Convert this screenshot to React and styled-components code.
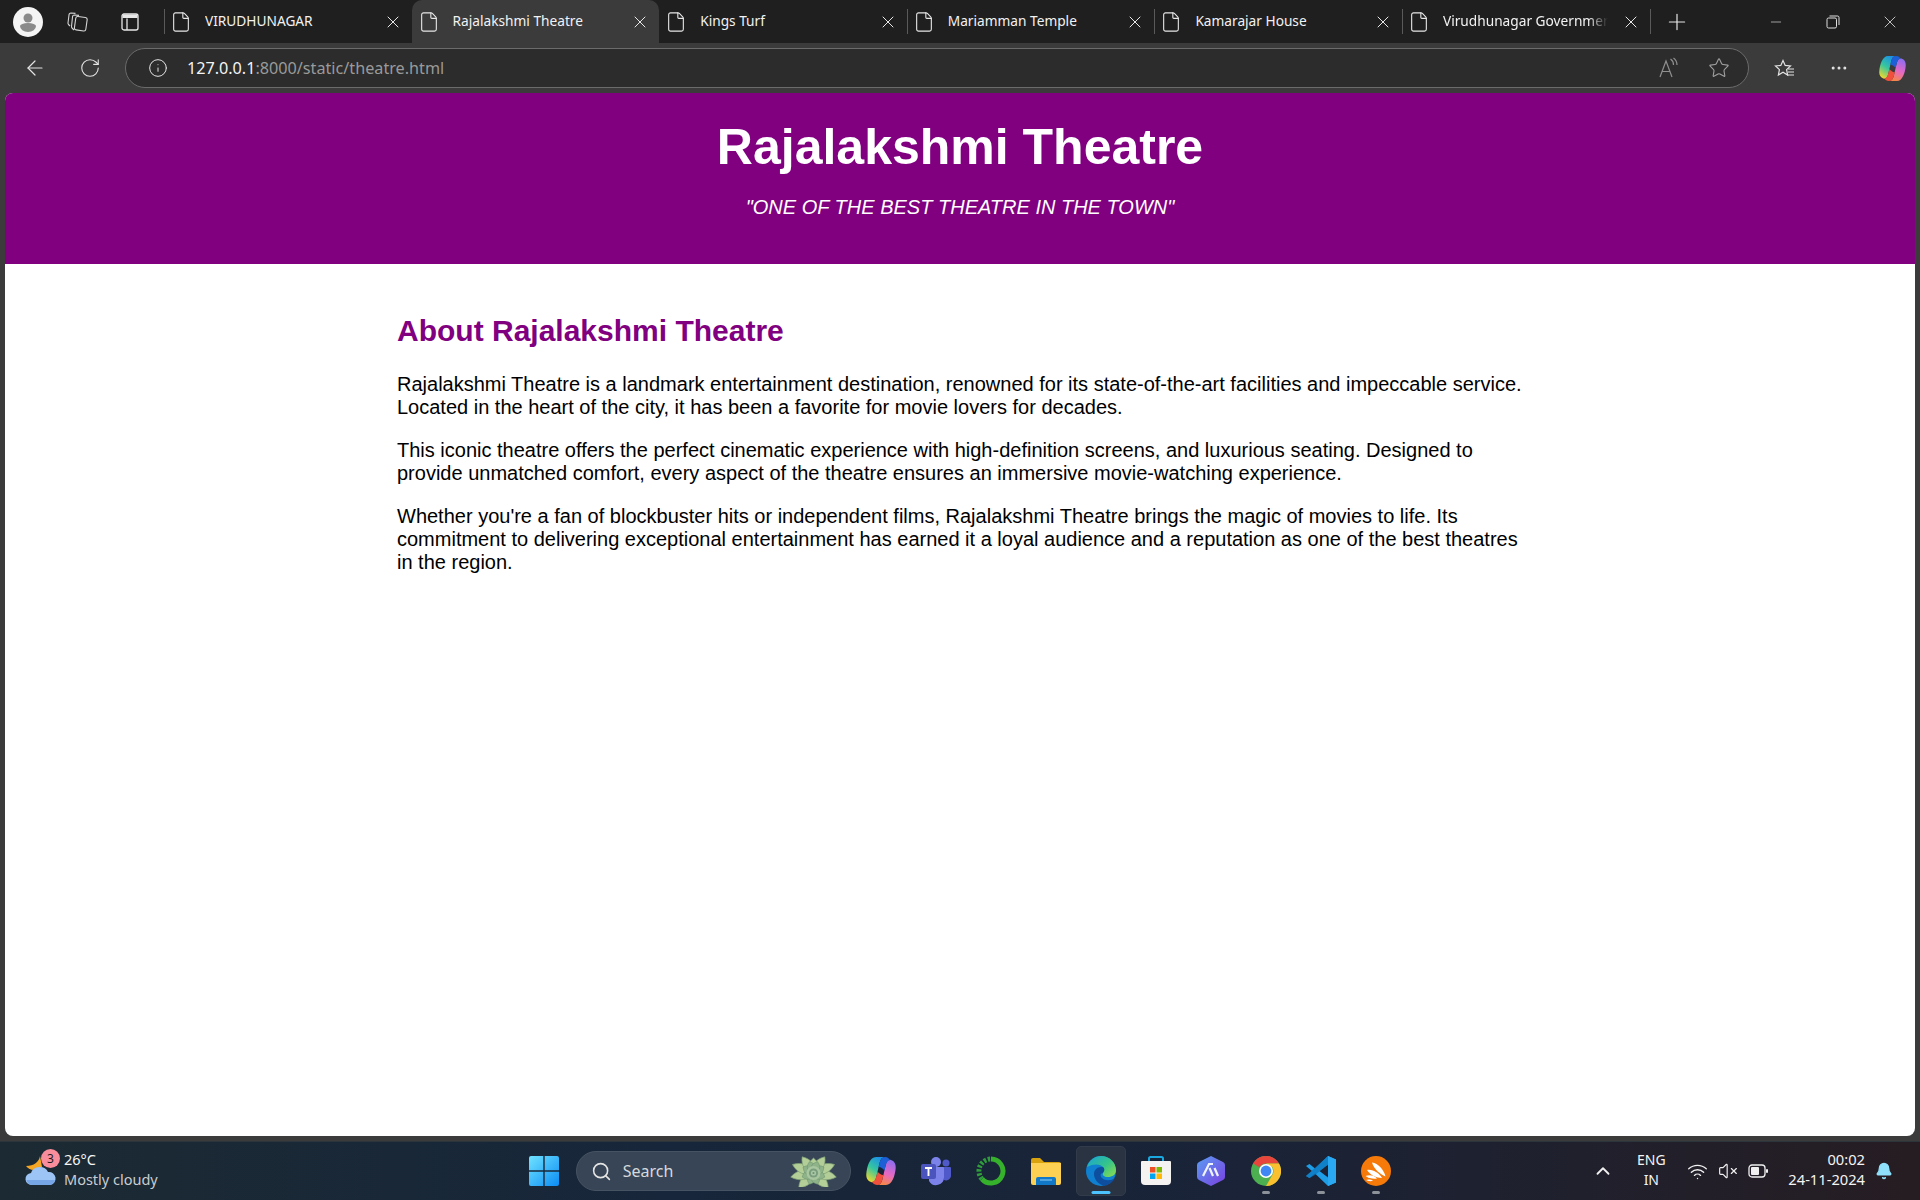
import styled, { createGlobalStyle } from "styled-components";
import {
  ArrowLeft,
  ChevronUp,
  File,
  Info,
  MoreHorizontal,
  Plus,
  RotateCw,
  Search,
  Star,
  Minus,
  X,
  Wifi,
  VolumeX,
  Bell,
} from "lucide-react";

const GlobalStyle = createGlobalStyle`
  html, body { margin: 0; padding: 0; height: 100%; }
  body { background: #3b3b3b; overflow: hidden; }
`;

const tabs = [
  { title: "VIRUDHUNAGAR", divider: true },
  { title: "Rajalakshmi Theatre", active: true },
  { title: "Kings Turf" },
  { title: "Mariamman Temple", divider: true },
  { title: "Kamarajar House", divider: true },
  { title: "Virudhunagar Government", divider: true, fade: true },
];

const ProfileIcon = () => (
  <svg width="30" height="30" viewBox="0 0 30 30">
    <circle cx="15" cy="15" r="15" fill="#f4f4f4" />
    <circle cx="15" cy="11" r="4.5" fill="#8a8a8a" />
    <path d="M7 19 a8 3 0 0 1 16 0 a8 6 0 0 1 -16 0z" fill="#8a8a8a" />
  </svg>
);

const WorkspacesIcon = () => (
  <svg width="22" height="22" viewBox="0 0 22 22" fill="none" stroke="#d4d4d4" strokeWidth="1.1">
    <rect x="9" y="6" width="11.5" height="13.5" rx="2" transform="rotate(8 15 13)" />
    <path d="M8 19 L6 17 a2 2 0 0 1 -0.5 -1.5 L6.5 6 a2 2 0 0 1 2 -2 L13 4.4" />
    <path d="M4 15 L2.5 13.5 a2 2 0 0 1 -0.5 -1.5 L3 4 a2 2 0 0 1 2 -2 L9.5 2.4" />
  </svg>
);

const VerticalTabsIcon = () => (
  <svg width="20" height="20" viewBox="0 0 20 20" fill="none" stroke="#e8e8e8" strokeWidth="1.3">
    <rect x="2" y="2" width="16" height="16" rx="2" />
    <path d="M7 6.5 V18" />
    <path d="M2.5 2.5 H17.5 V6 H2.5z" fill="#e8e8e8" stroke="none" />
  </svg>
);

const RestoreIcon = () => (
  <svg width="14" height="14" viewBox="0 0 14 14" fill="none" stroke="#e0e0e0" strokeWidth="1">
    <rect x="1" y="3" width="9.5" height="10" rx="1.5" />
    <path d="M3.5 1 H11.5 a1.5 1.5 0 0 1 1.5 1.5 V10" />
  </svg>
);

const ReadAloudIcon = () => (
  <svg width="22" height="22" viewBox="0 0 22 22" fill="none" stroke="#8f8f8f" strokeWidth="1.2">
    <path d="M2 20 L8 4 L14 20 M4.2 14.5 H11.8" />
    <path d="M12.5 2 a7 7 0 0 1 3 6 M15.5 1 a9 9 0 0 1 3.5 7" />
  </svg>
);

const FavoritesIcon = () => (
  <svg width="22" height="22" viewBox="0 0 22 22" fill="none" stroke="#e4e4e4" strokeWidth="1.2">
    <path d="M9 2.5 L11.2 7.4 L16.5 8 L12.6 11.6 L13.6 17 L9 14.2 L4.4 17 L5.4 11.6 L1.5 8 L6.8 7.4z" transform="translate(0 1)" />
    <path d="M14 12 H20 M14 15 H20 M13 18 H20" />
  </svg>
);

const CopilotIcon = ({ id, size }) => (
  <svg width={size} height={size} viewBox="0 0 30 30">
    <defs>
      <linearGradient id={`${id}a`} x1="0.7" y1="0" x2="0.2" y2="1">
        <stop offset="0" stopColor="#1c8fe8" />
        <stop offset="0.5" stopColor="#35c6a0" />
        <stop offset="1" stopColor="#f3d92c" />
      </linearGradient>
      <linearGradient id={`${id}b`} x1="0.7" y1="0" x2="0.4" y2="1">
        <stop offset="0" stopColor="#8a6df0" />
        <stop offset="0.55" stopColor="#e668c4" />
        <stop offset="1" stopColor="#f6874a" />
      </linearGradient>
    </defs>
    <path d="M10 1 H19 C16 1 14.5 3 13.5 7 L10.5 20 C9.5 25 7.5 27 5 26 C2 25 0 22.5 0.3 18 C1 10 4 1 10 1z" fill={`url(#${id}a)`} />
    <path d="M20 29 H11 C14 29 15.5 27 16.5 23 L19.5 10 C20.5 5 22.5 3 25 4 C28 5 30 7.5 29.7 12 C29 20 26 29 20 29z" fill={`url(#${id}b)`} />
    <path d="M13.5 7 C14.5 3 16 1 19 1 C22 1 23.5 3 24 4.2 C22 4 20.5 6 19.5 10 L18.5 14.5 C16.5 12 14 10.5 12.6 11z" fill="#1d5fd6" />
    <path d="M16.5 23 C15.5 27 14 29 11 29 C8 29 6.5 27 6 25.8 C8 26 9.5 24 10.5 20 L11.5 15.5 C13.5 18 16 19.5 17.4 19z" fill="#f0503c" />
  </svg>
);

const WeatherIcon = () => (
  <svg width="32" height="30" viewBox="0 0 32 30">
    <path d="M15 0 C14 6 9 10 1 10 C5 15 11 15 17 11z" fill="#f5a623" />
    <path d="M7 29 a6 6 0 0 1 -1 -12 a9 8 0 0 1 17 -1 a6.5 6.5 0 0 1 2 13z" fill="#9cc4f5" />
    <path d="M7 29 a6 6 0 0 1 -5.5 -5 H30 a6.5 6.5 0 0 1 -5 5z" fill="#76a6e6" />
  </svg>
);

const WindowsIcon = () => (
  <svg width="30" height="30" viewBox="0 0 30 30">
    <defs>
      <linearGradient id="win" x1="0" y1="0" x2="1" y2="1">
        <stop offset="0" stopColor="#6fe3ff" />
        <stop offset="1" stopColor="#0b8cf5" />
      </linearGradient>
    </defs>
    <path d="M0 2 a2 2 0 0 1 2 -2 H14.3 V14.3 H0z M15.7 0 H28 a2 2 0 0 1 2 2 V14.3 H15.7z M0 15.7 H14.3 V30 H2 a2 2 0 0 1 -2 -2z M15.7 15.7 H30 V28 a2 2 0 0 1 -2 2 H15.7z" fill="url(#win)" />
  </svg>
);

const petal = "M0 0 C-5 -4 -5 -10 0 -15 C5 -10 5 -4 0 0z";

// side petals reach further out than the top and bottom ones
const petalLength = (angle) => 1 + 0.55 * Math.abs(Math.sin((angle * Math.PI) / 180));

const SucculentIcon = () => (
  <svg width="47" height="31" viewBox="-23.5 -17 47 31">
    {[-135, 135, -100, 100, -68, 68, -35, 35, 0].map((angle) => (
      <path
        key={angle}
        d={petal}
        fill="#b3cf97"
        stroke="#7fa276"
        strokeWidth="0.5"
        transform={`rotate(${angle}) scale(1.25 ${petalLength(angle)})`}
      />
    ))}
    {[-160, 160, -110, 110, -60, 60, -20, 20].map((angle) => (
      <path key={angle} d={petal} fill="#8fb389" stroke="#6b8f70" strokeWidth="0.5" transform={`rotate(${angle}) scale(1.15 0.8)`} />
    ))}
    <circle r="7" fill="#a8c69f" />
    <circle r="4.6" fill="#7a9e7d" />
    <circle r="2.6" fill="#a9c7a4" />
    <circle r="1.1" fill="#6e9274" />
  </svg>
);

const TeamsIcon = () => (
  <svg width="30" height="30" viewBox="0 0 30 30">
    <circle cx="15" cy="6" r="5" fill="#7b83eb" />
    <circle cx="25" cy="7" r="3.5" fill="#5059c9" />
    <path d="M20 11 H29 a1 1 0 0 1 1 1 V19 a5 5 0 0 1 -7 5z" fill="#5059c9" />
    <path d="M8 11 H22 a1 1 0 0 1 1 1 V21 a8 8 0 0 1 -15 4z" fill="#7b83eb" />
    <rect x="0" y="8" width="15" height="15" rx="2" fill="#4b53bc" />
    <path d="M4 12 H11 M7.5 12 V20" stroke="#fff" strokeWidth="1.9" fill="none" />
  </svg>
);

const RingIcon = () => (
  <svg width="30" height="30" viewBox="0 0 30 30" fill="none">
    <path d="M15 3 A12 12 0 1 1 6 23" stroke="#35b12c" strokeWidth="5" />
    <path d="M6 23 A12 12 0 0 1 15 3" stroke="#2f9e3a" strokeWidth="5" strokeDasharray="2.4 1.6" />
  </svg>
);

const FolderIcon = () => (
  <svg width="30" height="27" viewBox="0 0 30 27">
    <path d="M0 2 a2 2 0 0 1 2 -2 H9 L13 4 H28 a2 2 0 0 1 2 2 V10 H0z" fill="#d9a30f" />
    <path d="M0 5 H30 V25 a2 2 0 0 1 -2 2 H2 a2 2 0 0 1 -2 -2z" fill="#fcd053" />
    <path d="M5 27 V21 a2 2 0 0 1 2 -2 H23 a2 2 0 0 1 2 2 V27z" fill="#1178c8" />
    <path d="M9 22 H21" stroke="#7cc4f2" strokeWidth="1.2" />
  </svg>
);

const EdgeIcon = () => (
  <svg width="30" height="30" viewBox="0 0 30 30">
    <defs>
      <linearGradient id="edgeTop" x1="0" y1="0" x2="1" y2="0.8">
        <stop offset="0" stopColor="#1ba2d8" />
        <stop offset="0.6" stopColor="#34c48a" />
        <stop offset="1" stopColor="#7fd858" />
      </linearGradient>
    </defs>
    <circle cx="15" cy="15" r="15" fill="#0f7fcf" />
    <path d="M1 11 C3 4 9 0 15 0 C24 0 30 7 30 14 C30 19 26 21 22 21 C18 21 16 19 17 17 C18 15 19 14 17.5 11.5 C15 8 8 7 1 11z" fill="url(#edgeTop)" />
    <path d="M17.5 11.5 C13 10 8 13 8 18 C8 23 12 28 18 30 C23 29 27 26 29 22 C25 25 19 25 16 22 C14 20 14 17 17 17 C18 15 19 14 17.5 11.5z" fill="#0d4f9e" />
  </svg>
);

const StoreIcon = () => (
  <svg width="30" height="30" viewBox="0 0 30 30">
    <path d="M8 7 V2.5 a1.5 1.5 0 0 1 1.5 -1.5 H20.5 a1.5 1.5 0 0 1 1.5 1.5 V7" fill="none" stroke="#1aa8e0" strokeWidth="2" />
    <path d="M0 6 a1 1 0 0 1 1 -1 H29 a1 1 0 0 1 1 1 V25 a4 4 0 0 1 -4 4 H4 a4 4 0 0 1 -4 -4z" fill="#f5f3f1" />
    <rect x="9" y="11" width="5.5" height="5.5" fill="#ef4f25" />
    <rect x="15.5" y="11" width="5.5" height="5.5" fill="#7fba00" />
    <rect x="9" y="17.5" width="5.5" height="5.5" fill="#00a4ef" />
    <rect x="15.5" y="17.5" width="5.5" height="5.5" fill="#ffb900" />
  </svg>
);

const HexIcon = () => (
  <svg width="28" height="30" viewBox="0 0 28 30">
    <defs>
      <linearGradient id="hex" x1="0" y1="0" x2="1" y2="1">
        <stop offset="0" stopColor="#5a9df2" />
        <stop offset="1" stopColor="#7a3fe0" />
      </linearGradient>
    </defs>
    <path d="M14 0 L26 6 Q28 7 28 9 V21 Q28 23 26 24 L14 30 L2 24 Q0 23 0 21 V9 Q0 7 2 6z" fill="url(#hex)" />
    <path d="M6 20 L12 8 L16 8 M16 20 L12.5 12 M21 20 L17.5 12" fill="none" stroke="#f0f4ff" strokeWidth="2.2" />
  </svg>
);

const ChromeIcon = () => (
  <svg width="30" height="30" viewBox="0 0 30 30">
    <circle cx="15" cy="15" r="15" fill="#4caf50" />
    <path d="M15 0 A15 15 0 0 1 28 7.5 H15 A7.5 7.5 0 0 0 8.5 11.2 L2 7.5 A15 15 0 0 1 15 0z" fill="#e8453c" />
    <path d="M28 7.5 A15 15 0 0 1 15 30 L21.5 18.7 A7.5 7.5 0 0 0 21.5 11.2 L15 7.5z" fill="#fbc02d" />
    <circle cx="15" cy="15" r="7" fill="#fff" />
    <circle cx="15" cy="15" r="5.4" fill="#3f87f5" />
  </svg>
);

const VsCodeIcon = () => (
  <svg width="30" height="30" viewBox="0 0 30 30">
    <path d="M22 0 L30 3.5 V26.5 L22 30 L9 17.5 L3.5 22 L0 20 L6 15 L0 10 L3.5 8 L9 12.5z M22 8.5 L13.5 15 L22 21.5z" fill="#1f9ee8" />
    <path d="M22 0 L30 3.5 V26.5 L22 30z" fill="#2aa8f2" />
    <path d="M22 0 V8.5 L9 19 L3.5 22 L0 20z" fill="#0c75bd" opacity="0.75" />
  </svg>
);

const OrangeIcon = () => (
  <svg width="30" height="30" viewBox="0 0 30 30">
    <circle cx="15" cy="15" r="15" fill="#f57a0a" />
    <g fill="#ffffff">
      <path d="M11 6.5 C17 7 23 14 24.5 20.5 C19 18 13 13.5 11 6.5z" />
      <path d="M6 14 C12 13 18 17 21 22 C15 22 9 19 6 14z" />
      <path d="M4.5 20 C9 18.5 13 19.5 16 22.5 C12 23 8 22.5 4.5 20z" />
      <path d="M5 24 C7 23 10 23.5 12 24.5 C10 25.5 8 25.5 5 24z" />
    </g>
  </svg>
);

const BatteryIcon = () => (
  <svg width="20" height="14" viewBox="0 0 20 14" fill="none">
    <rect x="1" y="1" width="16" height="12" rx="3" stroke="#f0f0f0" strokeWidth="1.3" />
    <rect x="3" y="3" width="8" height="8" rx="1" fill="#f0f0f0" />
    <rect x="18" y="5" width="2" height="4" rx="1" fill="#f0f0f0" />
  </svg>
);

const App = () => (
  <Screen>
    <GlobalStyle />
    <TabStrip>
      <StripLeft>
        <ProfileIcon />
        <StripIcon><WorkspacesIcon /></StripIcon>
        <StripIcon><VerticalTabsIcon /></StripIcon>
      </StripLeft>
      <TabList>
        {tabs.map((tab) => (
          <Tab key={tab.title} $active={tab.active} $divider={tab.divider}>
            <File size={22} strokeWidth={1.2} color="#e8e8e8" />
            <TabTitle $fade={tab.fade}>{tab.title}</TabTitle>
            <X size={20} strokeWidth={1.2} color="#e8e8e8" />
          </Tab>
        ))}
      </TabList>
      <NewTab><Plus size={26} strokeWidth={1.1} color="#e8e8e8" /></NewTab>
      <WindowControls>
        <WindowButton><Minus size={16} strokeWidth={1} color="#e0e0e0" /></WindowButton>
        <WindowButton><RestoreIcon /></WindowButton>
        <WindowButton><X size={20} strokeWidth={1} color="#e0e0e0" /></WindowButton>
      </WindowControls>
    </TabStrip>

    <Toolbar>
      <NavButton><ArrowLeft size={24} strokeWidth={1.2} color="#e4e4e4" /></NavButton>
      <NavButton><RotateCw size={22} strokeWidth={1.2} color="#e4e4e4" /></NavButton>
      <AddressBar>
        <Info size={20} strokeWidth={1.2} color="#e4e4e4" />
        <Url><strong>127.0.0.1</strong>:8000/static/theatre.html</Url>
        <AddressActions>
          <ReadAloudIcon />
          <Star size={22} strokeWidth={1.2} color="#a0a0a0" />
        </AddressActions>
      </AddressBar>
      <ToolActions>
        <ToolCell><FavoritesIcon /></ToolCell>
        <ToolCell><MoreHorizontal size={20} strokeWidth={1.6} color="#e4e4e4" /></ToolCell>
        <ToolCell><CopilotIcon id="copilotBar" size={27} /></ToolCell>
      </ToolActions>
    </Toolbar>

    <Page>
      <Hero>
        <Title>Rajalakshmi Theatre</Title>
        <Tagline>"ONE OF THE BEST THEATRE IN THE TOWN"</Tagline>
      </Hero>
      <Content>
        <Heading>About Rajalakshmi Theatre</Heading>
        <Paragraph>
          Rajalakshmi Theatre is a landmark entertainment destination, renowned for its state-of-the-art facilities and impeccable service. Located in the heart of the city, it has been a favorite for movie lovers for decades.
        </Paragraph>
        <Paragraph>
          This iconic theatre offers the perfect cinematic experience with high-definition screens, and luxurious seating. Designed to provide unmatched comfort, every aspect of the theatre ensures an immersive movie-watching experience.
        </Paragraph>
        <Paragraph>
          Whether you're a fan of blockbuster hits or independent films, Rajalakshmi Theatre brings the magic of movies to life. Its commitment to delivering exceptional entertainment has earned it a loyal audience and a reputation as one of the best theatres in the region.
        </Paragraph>
      </Content>
    </Page>

    <Taskbar>
      <WeatherWidget>
        <WeatherArt>
          <WeatherIcon />
          <WeatherBadge>3</WeatherBadge>
        </WeatherArt>
        <WeatherText>
          <Temperature>26°C</Temperature>
          <Condition>Mostly cloudy</Condition>
        </WeatherText>
      </WeatherWidget>

      <TaskIcons>
        <TaskButton><WindowsIcon /></TaskButton>
        <SearchBox>
          <Search size={21} strokeWidth={1.8} color="#e4e4e4" />
          <SearchLabel>Search</SearchLabel>
          <SucculentIcon />
        </SearchBox>
        <TaskButton><CopilotIcon id="copilotTask" size={30} /></TaskButton>
        <TaskButton><TeamsIcon /></TaskButton>
        <TaskButton><RingIcon /></TaskButton>
        <TaskButton><FolderIcon /></TaskButton>
        <TaskButton $current><EdgeIcon /><RunningDot $current /></TaskButton>
        <TaskButton><StoreIcon /></TaskButton>
        <TaskButton><HexIcon /></TaskButton>
        <TaskButton><ChromeIcon /><RunningDot /></TaskButton>
        <TaskButton><VsCodeIcon /><RunningDot /></TaskButton>
        <TaskButton><OrangeIcon /><RunningDot /></TaskButton>
      </TaskIcons>

      <Tray>
        <ChevronUp size={22} strokeWidth={2} color="#f0f0f0" />
        <Language>ENG<br />IN</Language>
        <TrayIcons>
          <Wifi size={21} strokeWidth={1.6} color="#f0f0f0" />
          <VolumeX size={20} strokeWidth={1.4} color="#f0f0f0" />
          <BatteryIcon />
        </TrayIcons>
        <Clock>00:02<br />24-11-2024</Clock>
        <Bell size={18} fill="#8fe0fb" color="#8fe0fb" />
      </Tray>
    </Taskbar>
  </Screen>
);

const Screen = styled.div`
  width: 1920px;
  height: 1200px;
  display: flex;
  flex-direction: column;
  background: #3b3b3b;
  font-family: "Noto Sans", "Open Sans", sans-serif;
  overflow: hidden;
`;

const TabStrip = styled.div`
  height: 43px;
  display: flex;
  align-items: flex-end;
  background: #1f1f1f;
  flex-shrink: 0;
`;

const StripLeft = styled.div`
  width: 164px;
  height: 43px;
  box-sizing: border-box;
  padding-left: 13px;
  display: grid;
  grid-template-columns: 30px 68px 38px;
  align-items: center;
`;

const StripIcon = styled.div`
  display: flex;
  justify-content: center;
`;

const TabList = styled.div`
  display: flex;
  height: 43px;
`;

const Tab = styled.div`
  position: relative;
  width: 247.6px;
  height: 43px;
  box-sizing: border-box;
  padding: 0 9px 0 6px;
  display: flex;
  align-items: center;
  gap: 13px;
  color: #f2f2f2;
  border-radius: 10px 10px 0 0;
  background: ${(props) => (props.$active ? "#3b3b3b" : "transparent")};
  svg { flex-shrink: 0; }
  ${(props) =>
    props.$divider &&
    `&::before {
      content: "";
      position: absolute;
      left: 0;
      top: 9px;
      width: 1px;
      height: 25px;
      background: #5a5a5a;
    }`}
`;

const TabTitle = styled.span`
  flex: 1;
  margin-top: -2px;
  font-size: 13.7px;
  white-space: nowrap;
  overflow: hidden;
  ${(props) =>
    props.$fade &&
    "mask-image: linear-gradient(to right, #000 88%, transparent 100%);"}
`;

const NewTab = styled.div`
  position: relative;
  height: 43px;
  width: 54px;
  display: flex;
  align-items: center;
  justify-content: center;
  &::before {
    content: "";
    position: absolute;
    left: 0;
    top: 9px;
    width: 1px;
    height: 25px;
    background: #5a5a5a;
  }
`;

const WindowControls = styled.div`
  margin-left: auto;
  padding-right: 1.5px;
  height: 43px;
  display: flex;
`;

const WindowButton = styled.div`
  width: 57px;
  display: flex;
  align-items: center;
  justify-content: center;
`;

const Toolbar = styled.div`
  height: 50px;
  flex-shrink: 0;
  display: flex;
  align-items: center;
  gap: 9px;
  padding-left: 12px;
  box-sizing: border-box;
  background: #3b3b3b;
`;

const NavButton = styled.div`
  width: 46px;
  height: 32px;
  display: flex;
  align-items: center;
  justify-content: center;
`;

const AddressBar = styled.div`
  margin-left: 3px;
  width: 1626px;
  height: 40px;
  box-sizing: border-box;
  display: flex;
  align-items: center;
  padding: 0 18px 0 22px;
  background: #2c2c2c;
  border: 1px solid #6b6b6b;
  border-radius: 20px;
`;

const Url = styled.span`
  margin-left: 19px;
  font-size: 16.2px;
  color: #9a9a9a;
  strong { font-weight: 400; color: #f4f4f4; }
`;

const AddressActions = styled.div`
  margin-left: auto;
  display: flex;
  align-items: center;
  gap: 28px;
`;

const ToolActions = styled.div`
  display: flex;
  align-items: center;
`;

const ToolCell = styled.div`
  width: 54px;
  display: flex;
  align-items: center;
  justify-content: center;
`;

const Page = styled.main`
  flex: 1;
  min-height: 0;
  margin: 0 5px 5px;
  background: #ffffff;
  border-radius: 8px;
  overflow: hidden;
  color: #000000;
  font-family: "Liberation Sans", Arial, sans-serif;
`;

const Hero = styled.header`
  height: 171px;
  box-sizing: border-box;
  padding-top: 26px;
  background: #800080;
  color: #ffffff;
  text-align: center;
`;

const Title = styled.h1`
  margin: 0;
  font-size: 50px;
  line-height: 57px;
  font-weight: 700;
`;

const Tagline = styled.p`
  margin: 19px 0 0;
  font-size: 20px;
  line-height: 24px;
  font-style: italic;
`;

const Content = styled.section`
  width: 1126px;
  margin: 0 auto;
  padding-top: 50px;
`;

const Heading = styled.h2`
  margin: 0 0 25px;
  font-size: 30px;
  line-height: 34px;
  color: #800080;
  font-weight: 700;
`;

const Paragraph = styled.p`
  margin: 0 0 20px;
  font-size: 20px;
  line-height: 23px;
`;

const Taskbar = styled.footer`
  height: 59px;
  flex-shrink: 0;
  display: grid;
  grid-template-columns: 1fr auto 1fr;
  align-items: center;
  background: linear-gradient(to right, #1c2a33 0%, #17263a 35%, #1a2337 65%, #261d22 100%);
  border-top: 1px solid #2c343c;
  box-sizing: border-box;
`;

const WeatherWidget = styled.div`
  display: flex;
  align-items: center;
  padding-left: 25px;
  gap: 7px;
`;

const WeatherArt = styled.div`
  position: relative;
  width: 32px;
  height: 30px;
`;

const WeatherBadge = styled.span`
  position: absolute;
  top: -7px;
  right: -3px;
  width: 19px;
  height: 19px;
  border-radius: 50%;
  background: #f98d9b;
  color: #1b1b1b;
  font-size: 12px;
  line-height: 19px;
  text-align: center;
`;

const WeatherText = styled.div`
  display: flex;
  flex-direction: column;
  margin-top: -4px;
  font-size: 14.5px;
  line-height: 20px;
`;

const Temperature = styled.span`
  color: #f6f6f6;
`;

const Condition = styled.span`
  color: #c9cdd1;
`;

const TaskIcons = styled.div`
  display: flex;
  align-items: center;
  gap: 5px;
`;

const TaskButton = styled.div`
  position: relative;
  width: 50px;
  height: 50px;
  display: flex;
  align-items: center;
  justify-content: center;
  box-sizing: border-box;
  border-radius: 5px;
  background: ${(props) => (props.$current ? "#2a3342" : "transparent")};
  border: 1px solid ${(props) => (props.$current ? "#323b4a" : "transparent")};
`;

const RunningDot = styled.span`
  position: absolute;
  bottom: 1px;
  left: 50%;
  transform: translateX(-50%);
  width: ${(props) => (props.$current ? "19px" : "8px")};
  height: 3.5px;
  border-radius: 2px;
  background: ${(props) => (props.$current ? "#4cc2ff" : "#8d929a")};
`;

const SearchBox = styled.div`
  width: 275px;
  height: 40px;
  box-sizing: border-box;
  display: flex;
  align-items: center;
  padding: 0 13px 0 14px;
  margin-left: 1.5px;
  background: #374556;
  border: 1px solid #465363;
  border-radius: 20px;
`;

const SearchLabel = styled.span`
  flex: 1;
  margin-left: 11px;
  font-size: 16px;
  color: #d6d9dc;
`;

const Tray = styled.div`
  display: flex;
  align-items: center;
  justify-content: flex-end;
  padding-right: 27px;
  color: #f4f4f4;
`;

const Language = styled.div`
  margin-left: 17px;
  margin-top: -2px;
  width: 40px;
  text-align: center;
  font-size: 14px;
  line-height: 20px;
`;

const TrayIcons = styled.div`
  margin-left: 16px;
  display: flex;
  align-items: center;
  gap: 10px;
`;

const Clock = styled.div`
  margin-left: 20px;
  margin-right: 10px;
  margin-top: -4px;
  text-align: right;
  font-size: 14.7px;
  line-height: 20px;
`;

export default App;
